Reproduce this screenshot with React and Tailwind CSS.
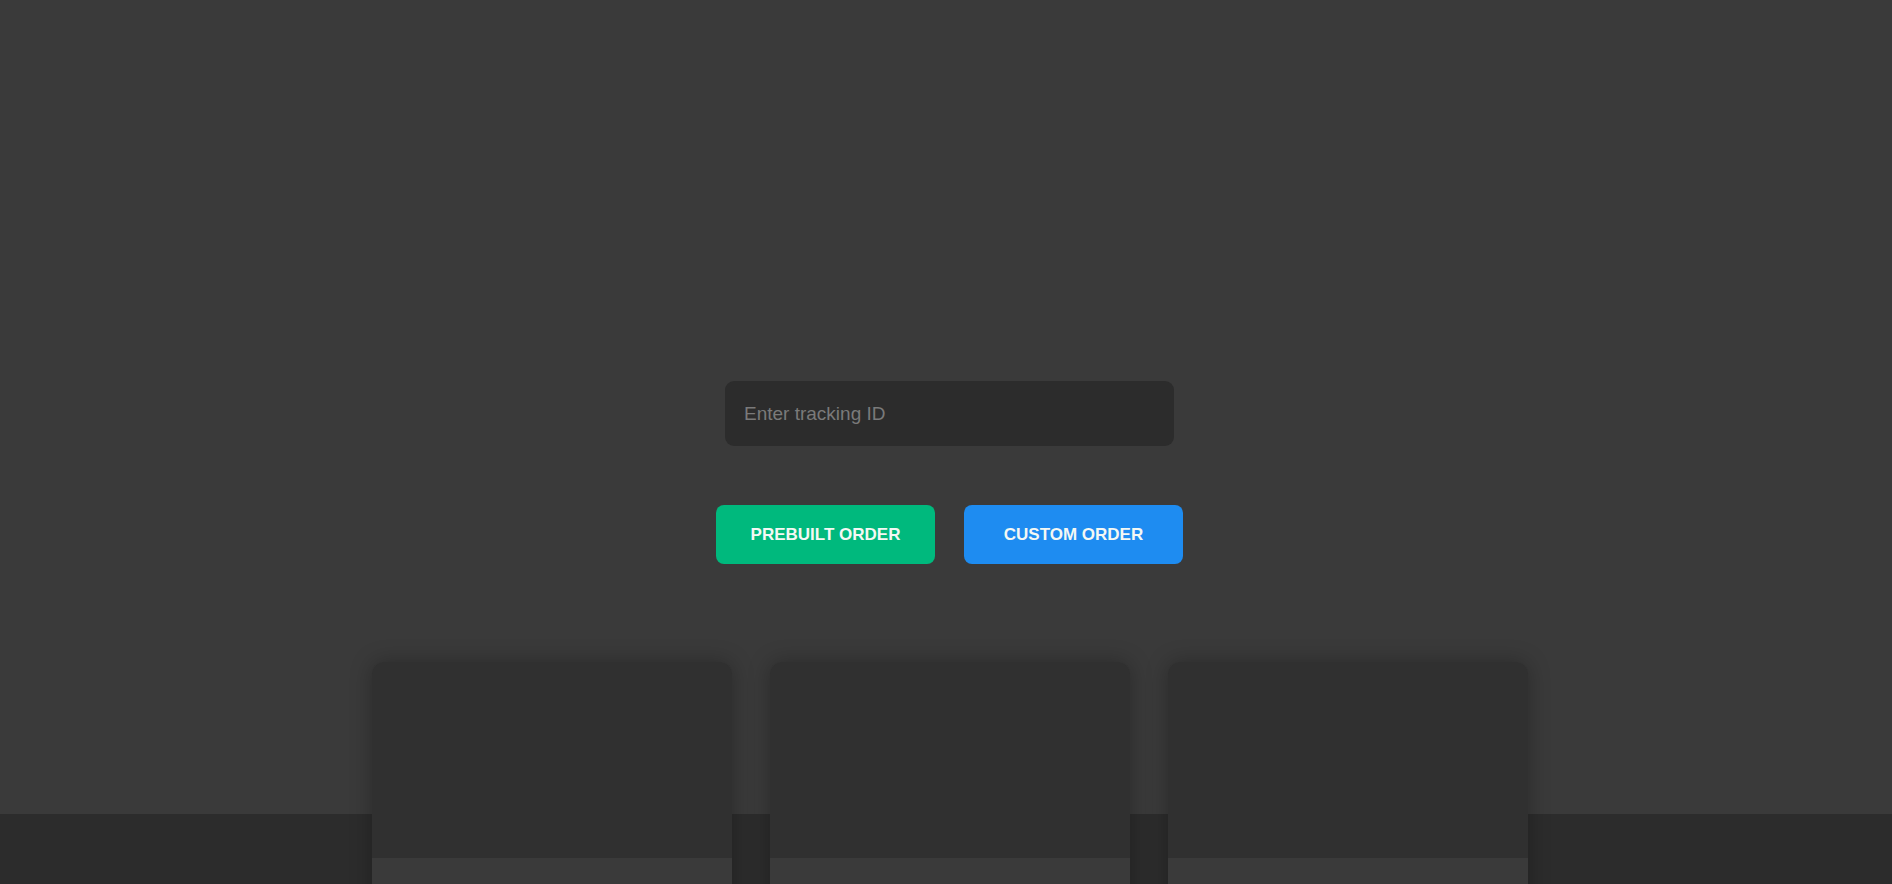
export default function App() {
  const cards = [1, 2, 3]

  return (
    <div className="h-[884px] overflow-hidden bg-[#3a3a3a] pl-[7px] font-['Liberation_Sans',Arial,sans-serif]">
      {/* Tracking search */}
      <div className="flex flex-col items-center pt-[381px]">
        <input
          type="text"
          placeholder="Enter tracking ID"
          className="w-[449px] h-[65px] rounded-[9px] bg-[#2c2c2c] px-[19px] text-[19px] text-white placeholder:text-[#7a7a7a] outline-none"
        />

        {/* Order buttons */}
        <div className="flex gap-[29px] mt-[59px]">
          <button className="w-[219px] h-[59px] rounded-[8px] bg-[#00b97d] text-[17px] font-bold text-[#f4f8f4]">
            PREBUILT ORDER
          </button>
          <button className="w-[219px] h-[59px] rounded-[8px] bg-[#1e8cf1] text-[17px] font-bold text-[#f4f8f4]">
            CUSTOM ORDER
          </button>
        </div>
      </div>

      {/* Cards over the footer band */}
      <div className="-ml-[7px] mt-[76px] pt-[22px] pl-[7px] bg-[linear-gradient(to_bottom,#3a3a3a_174px,#2c2c2c_174px)]">
        <div className="flex justify-center gap-[38px]">
          {cards.map(c => (
            <div
              key={c}
              className="w-[360px] h-[320px] rounded-t-[12px] overflow-hidden bg-[#3a3a3a] shadow-[0_0_22px_rgba(0,0,0,0.28)]"
            >
              <div className="h-[196px] bg-[#303030]" />
            </div>
          ))}
        </div>
      </div>
    </div>
  )
}
